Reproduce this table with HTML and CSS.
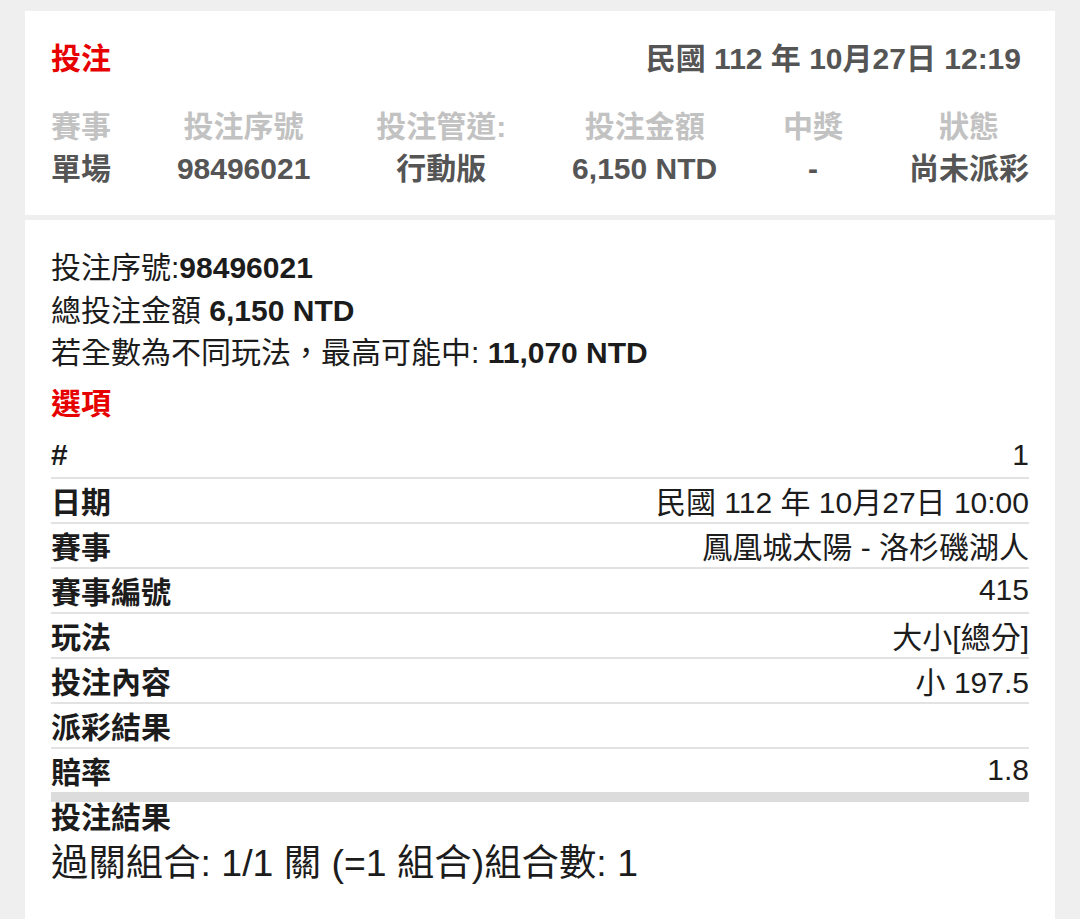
FILE: index.html
```html
<!DOCTYPE html>
<html lang="zh-Hant">
<head>
<meta charset="utf-8">
<title>投注</title>
<link rel="stylesheet" href="styles.css">
</head>
<body>
<div class="page">
  <section class="card summary">
    <div class="summary-head">
      <h2 class="title">投注</h2>
      <span class="stamp">民國 112 年 10月27日 12:19</span>
    </div>
    <div class="summary-cols">
      <div class="col"><div class="col-label">賽事</div><div class="col-value">單場</div></div>
      <div class="col"><div class="col-label">投注序號</div><div class="col-value">98496021</div></div>
      <div class="col"><div class="col-label">投注管道:</div><div class="col-value">行動版</div></div>
      <div class="col"><div class="col-label">投注金額</div><div class="col-value">6,150 NTD</div></div>
      <div class="col"><div class="col-label">中獎</div><div class="col-value">-</div></div>
      <div class="col"><div class="col-label">狀態</div><div class="col-value">尚未派彩</div></div>
    </div>
  </section>

  <section class="card detail">
    <p class="line">投注序號:<b>98496021</b></p>
    <p class="line">總投注金額 <b>6,150 NTD</b></p>
    <p class="line">若全數為不同玩法，最高可能中: <b>11,070 NTD</b></p>
    <h3 class="title options-title">選項</h3>
    <div class="sel-table">
      <div class="sel-row"><span class="sel-key">#</span><span class="sel-val">1</span></div>
      <div class="sel-row"><span class="sel-key">日期</span><span class="sel-val">民國 112 年 10月27日 10:00</span></div>
      <div class="sel-row"><span class="sel-key">賽事</span><span class="sel-val">鳳凰城太陽 - 洛杉磯湖人</span></div>
      <div class="sel-row"><span class="sel-key">賽事編號</span><span class="sel-val">415</span></div>
      <div class="sel-row"><span class="sel-key">玩法</span><span class="sel-val">大小[總分]</span></div>
      <div class="sel-row"><span class="sel-key">投注內容</span><span class="sel-val">小 197.5</span></div>
      <div class="sel-row"><span class="sel-key">派彩結果</span><span class="sel-val"></span></div>
      <div class="sel-row last"><span class="sel-key">賠率</span><span class="sel-val">1.8</span></div>
    </div>
    <div class="result-label">投注結果</div>
    <div class="combo">過關組合: 1/1 關 (=1 組合)組合數: 1</div>
  </section>
</div>
</body>
</html>
```

FILE: styles.css
```css
html, body {
  margin: 0;
  padding: 0;
  background: #efefef;
}

body {
  font-family: "Liberation Sans", "Noto Sans CJK TC", sans-serif;
  font-size: 30px;
  color: #1c1c1c;
}

.page {
  padding: 11px 25px 0;
  display: flex;
  flex-direction: column;
  gap: 5px;
}

.card {
  background: #ffffff;
  padding-left: 26px;
  padding-right: 26px;
}

.title {
  margin: 0;
  font-size: 30px;
  font-weight: bold;
  color: #e60000;
  line-height: 42px;
}

/* summary card */
.summary {
  padding-top: 27px;
  padding-bottom: 25px;
}

.summary-head {
  display: flex;
  justify-content: space-between;
  align-items: center;
  padding-right: 8px;
}

.stamp {
  font-weight: bold;
  color: #555555;
  line-height: 42px;
}

.summary-cols {
  display: flex;
  justify-content: space-between;
  margin-top: 26px;
}

.col {
  text-align: center;
  line-height: 42px;
  font-weight: bold;
}

.col-label {
  color: #c2c2c2;
}

.col-value {
  color: #555555;
}

/* detail card */
.detail {
  padding-top: 27px;
  padding-bottom: 40px;
}

.line {
  margin: 0;
  line-height: 42.5px;
}

.line b {
  font-weight: bold;
}

.options-title {
  margin-top: 8px;
  margin-bottom: 9px;
}

.sel-table {
  display: flex;
  flex-direction: column;
}

.sel-row {
  display: flex;
  justify-content: space-between;
  align-items: center;
  height: 43px;
  border-bottom: 2px solid #e2e2e2;
}

.sel-row.last {
  border-bottom: 10px solid #dcdcdc;
}

.sel-key {
  font-weight: bold;
}

.result-label {
  font-weight: bold;
  line-height: 32px;
}

.combo {
  font-size: 37.4px;
  line-height: 58px;
}
```
